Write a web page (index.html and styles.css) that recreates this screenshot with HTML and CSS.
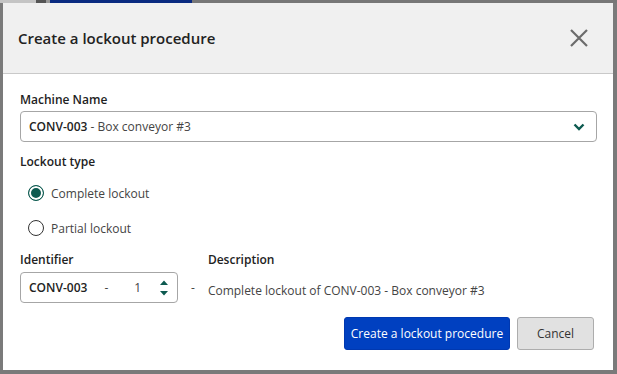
FILE: index.html
```html
<!DOCTYPE html>
<html lang="en">
<head>
  <meta charset="UTF-8">
  <meta name="viewport" content="width=device-width, initial-scale=1.0">
  <title>Create a lockout procedure</title>
  <link rel="stylesheet" href="styles.css">
</head>
<body>
  <div class="modal">
    <header class="modal-header">
      <h1>Create a lockout procedure</h1>
      <button type="button" class="close-btn" aria-label="Close">
        <svg width="20" height="20" viewBox="0 0 20 20">
          <path d="M2 2 L18 18 M18 2 L2 18" stroke="#6b6b6b" stroke-width="2.2" fill="none"/>
        </svg>
      </button>
    </header>

    <form class="modal-body">
      <div class="form-group">
        <label for="machine">Machine Name</label>
        <div class="select-box" id="machine">
          <span><b>CONV-003</b> - Box conveyor #3</span>
          <svg width="12" height="8" viewBox="0 0 12 8">
            <path d="M1.5 1.5 L6 6 L10.5 1.5" stroke="#0d5a50" stroke-width="2.4" fill="none"/>
          </svg>
        </div>
      </div>

      <div class="form-group">
        <label>Lockout type</label>
        <div class="radio-list">
          <div class="radio-row">
            <span class="radio checked"></span>
            <span>Complete lockout</span>
          </div>
          <div class="radio-row">
            <span class="radio"></span>
            <span>Partial lockout</span>
          </div>
        </div>
      </div>

      <div class="id-row">
        <div class="id-col">
          <label>Identifier</label>
          <div class="id-field">
            <div class="id-input">
              <b>CONV-003</b>
              <span class="dash">-</span>
              <span class="num">1</span>
              <span class="spin">
                <svg width="10" height="18" viewBox="0 0 10 18">
                  <path d="M1 6 L5 1.5 L9 6 Z M1 12 L5 16.5 L9 12 Z" fill="#0d5a50"/>
                </svg>
              </span>
            </div>
            <span class="sep">-</span>
          </div>
        </div>
        <div class="desc-col">
          <label>Description</label>
          <p>Complete lockout of CONV-003 - Box conveyor #3</p>
        </div>
      </div>

      <div class="form-actions">
        <button type="button" class="save-btn">Create a lockout procedure</button>
        <button type="button" class="cancel-btn">Cancel</button>
      </div>
    </form>
  </div>
</body>
</html>
```

FILE: styles.css
```css
* {
  margin: 0;
  padding: 0;
  box-sizing: border-box;
}
body {
  font-family: 'Open Sans', 'Noto Sans', sans-serif;
  font-size: 12px;
  color: #444;
  background: linear-gradient(to right, #c4c4c4 36px, #555 36px, #555 46px, #999 46px, #999 50px, #0a2a80 50px, #0a2a80 192px, #777 192px) top left / 100% 3px no-repeat, #7a7a7a;
  width: 617px;
  height: 374px;
  padding: 3px 4px 4px 3px;
}
.modal {
  width: 610px;
  height: 367px;
  background: #fff;
  display: flex;
  flex-direction: column;
}
.modal-header {
  height: 71px;
  background: #f0f0f0;
  border-bottom: 1px solid #c9c9c9;
  display: flex;
  align-items: center;
  justify-content: space-between;
  padding: 0 24px 0 15px;
}
.modal-header h1 {
  font-size: 15px;
  font-weight: 600;
  color: #222;
}
.close-btn {
  border: none;
  background: none;
  display: flex;
  cursor: pointer;
}
.modal-body {
  padding: 17px 16px 0 17px;
  display: flex;
  flex-direction: column;
}
label {
  display: block;
  font-weight: 600;
  color: #222;
  line-height: 18px;
}
.form-group {
  margin-bottom: 11px;
}
.form-group label {
  margin-bottom: 2px;
}
.select-box {
  height: 31px;
  border: 1px solid #a6a6a6;
  border-radius: 4px;
  display: flex;
  align-items: center;
  justify-content: space-between;
  padding: 0 11px 0 8px;
}
.select-box b,
.id-input b {
  color: #222;
  font-weight: 600;
}
.radio-list {
  display: flex;
  flex-direction: column;
  gap: 11px;
  padding: 8px 0 0 8px;
}
.radio-row {
  display: flex;
  align-items: center;
  gap: 7px;
  height: 24px;
}
.radio {
  width: 16px;
  height: 16px;
  border: 1.5px solid #333;
  border-radius: 50%;
  background: #fff;
}
.radio.checked {
  border-color: #0d5a50;
  background: #0d5a50;
  box-shadow: inset 0 0 0 2px #fff;
}
.id-row {
  display: flex;
  margin-top: 0;
}
.id-col label {
  margin-bottom: 3px;
}
.id-field {
  display: flex;
  align-items: center;
}
.id-input {
  width: 158px;
  height: 31px;
  border: 1px solid #a6a6a6;
  border-radius: 4px;
  display: flex;
  align-items: center;
  padding: 0 8px 0 8px;
}
.id-input .dash {
  margin-left: 17px;
}
.id-input .num {
  margin-left: 26px;
}
.id-input .spin {
  margin-left: auto;
  display: flex;
}
.sep {
  margin: 0 0 0 13px;
}
.desc-col {
  margin-left: 13px;
}
.desc-col label {
  margin-bottom: 13px;
}
.form-actions {
  display: flex;
  justify-content: flex-end;
  gap: 7px;
  margin-top: 14px;
  padding-right: 3px;
}
.save-btn,
.cancel-btn {
  height: 33px;
  font-family: inherit;
  font-size: 12px;
  border-radius: 3px;
  cursor: pointer;
  padding: 0;
  white-space: nowrap;
}
.save-btn {
  background: #0040c0;
  border: 1px solid #0038b0;
  color: #fff;
  width: 166px;
}
.cancel-btn {
  background: #e1e1e1;
  border: 1px solid #adadad;
  color: #333;
  width: 77px;
}
```
